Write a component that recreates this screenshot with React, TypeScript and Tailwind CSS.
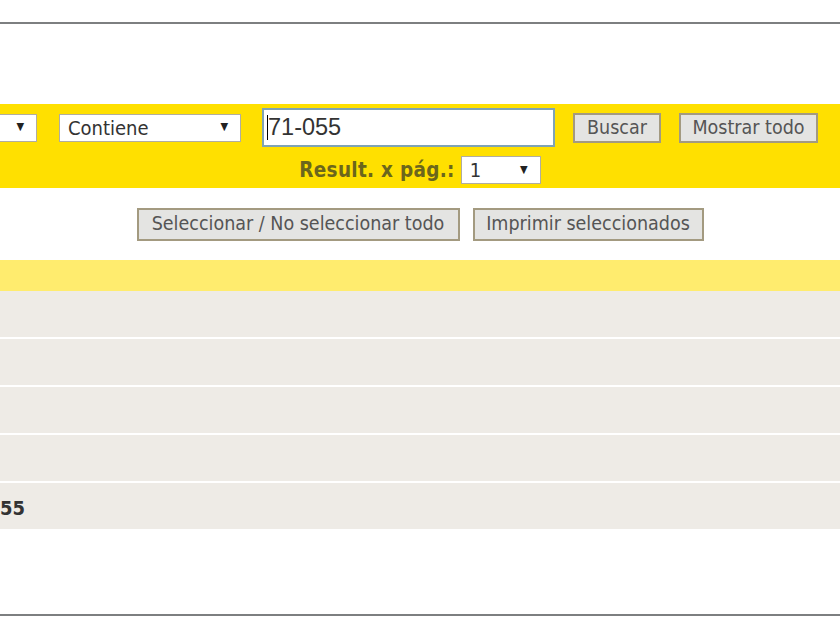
import React from "react";

const ui = { fontFamily: '"DejaVu Sans Condensed", "DejaVu Sans", Verdana, sans-serif' };

function FakeSelect({ value, className = "" }: { value: string; className?: string }) {
  return (
    <div
      className={`flex items-center justify-between bg-white border border-[#b0ada0] text-[#333] text-[20px] pl-2 pr-3 ${className}`}
      style={ui}
    >
      <span>{value}</span>
      <span className="text-[11px] text-[#222]">▼</span>
    </div>
  );
}

function GreyButton({ label, className = "" }: { label: string; className?: string }) {
  return (
    <button
      className={`flex items-center justify-center bg-[#e4e4e2] border-2 border-[#a39a80] text-[#555] text-[19.5px] ${className}`}
      style={ui}
    >
      {label}
    </button>
  );
}

export default function App() {
  const rows = [0, 1, 2, 3, 4];
  return (
    <div className="w-[840px] h-[630px] bg-white overflow-hidden flex flex-col">
      <div className="h-[22px]" />
      <div className="h-[2px] bg-[#7d7f80]" />
      <div className="h-[80px]" />

      <div className="h-[84px] bg-[#ffe000] flex flex-col pt-[4px]">
        <div className="flex items-center h-[39px]">
          <FakeSelect value="" className="w-[150px] h-[28px] -ml-[113px]" />
          <FakeSelect value="Contiene" className="w-[182px] h-[28px] ml-[22px]" />
          <div className="ml-[21px] w-[293px] h-[39px] bg-white border-2 border-[#7fa3b5] flex items-center pl-[3px]">
            <span className="w-[1px] h-[25px] bg-black" />
            <span
              className="text-[23.5px] text-[#333] leading-none"
              style={{ fontFamily: '"Liberation Sans", Arial, sans-serif' }}
            >
              71-055
            </span>
          </div>
          <GreyButton label="Buscar" className="ml-[18px] w-[88px] h-[30px]" />
          <GreyButton label="Mostrar todo" className="ml-[18px] w-[139px] h-[30px]" />
        </div>
        <div className="flex items-center justify-center gap-[6px] mt-[8px]">
          <span className="font-bold text-[20.5px] tracking-[0.3px] text-[#6b661c]" style={ui}>
            Result. x pág.:
          </span>
          <FakeSelect value="1" className="w-[80px] h-[28px]" />
        </div>
      </div>

      <div className="h-[72px] flex items-center justify-center gap-[13px]">
        <GreyButton label="Seleccionar / No seleccionar todo" className="w-[323px] h-[33px]" />
        <GreyButton label="Imprimir seleccionados" className="w-[231px] h-[33px]" />
      </div>

      <div className="h-[31px] bg-[#ffec6e]" />

      <div className="flex flex-col gap-[2px]">
        {rows.map((r) => (
          <div key={r} className="h-[46px] bg-[#eeebe6] flex items-center">
            {r === 4 && (
              <span className="font-bold text-[20px] text-[#333] mt-[4px]" style={ui}>
                55
              </span>
            )}
          </div>
        ))}
      </div>

      <div className="h-[85px]" />
      <div className="h-[2px] bg-[#7d7f80]" />
    </div>
  );
}
